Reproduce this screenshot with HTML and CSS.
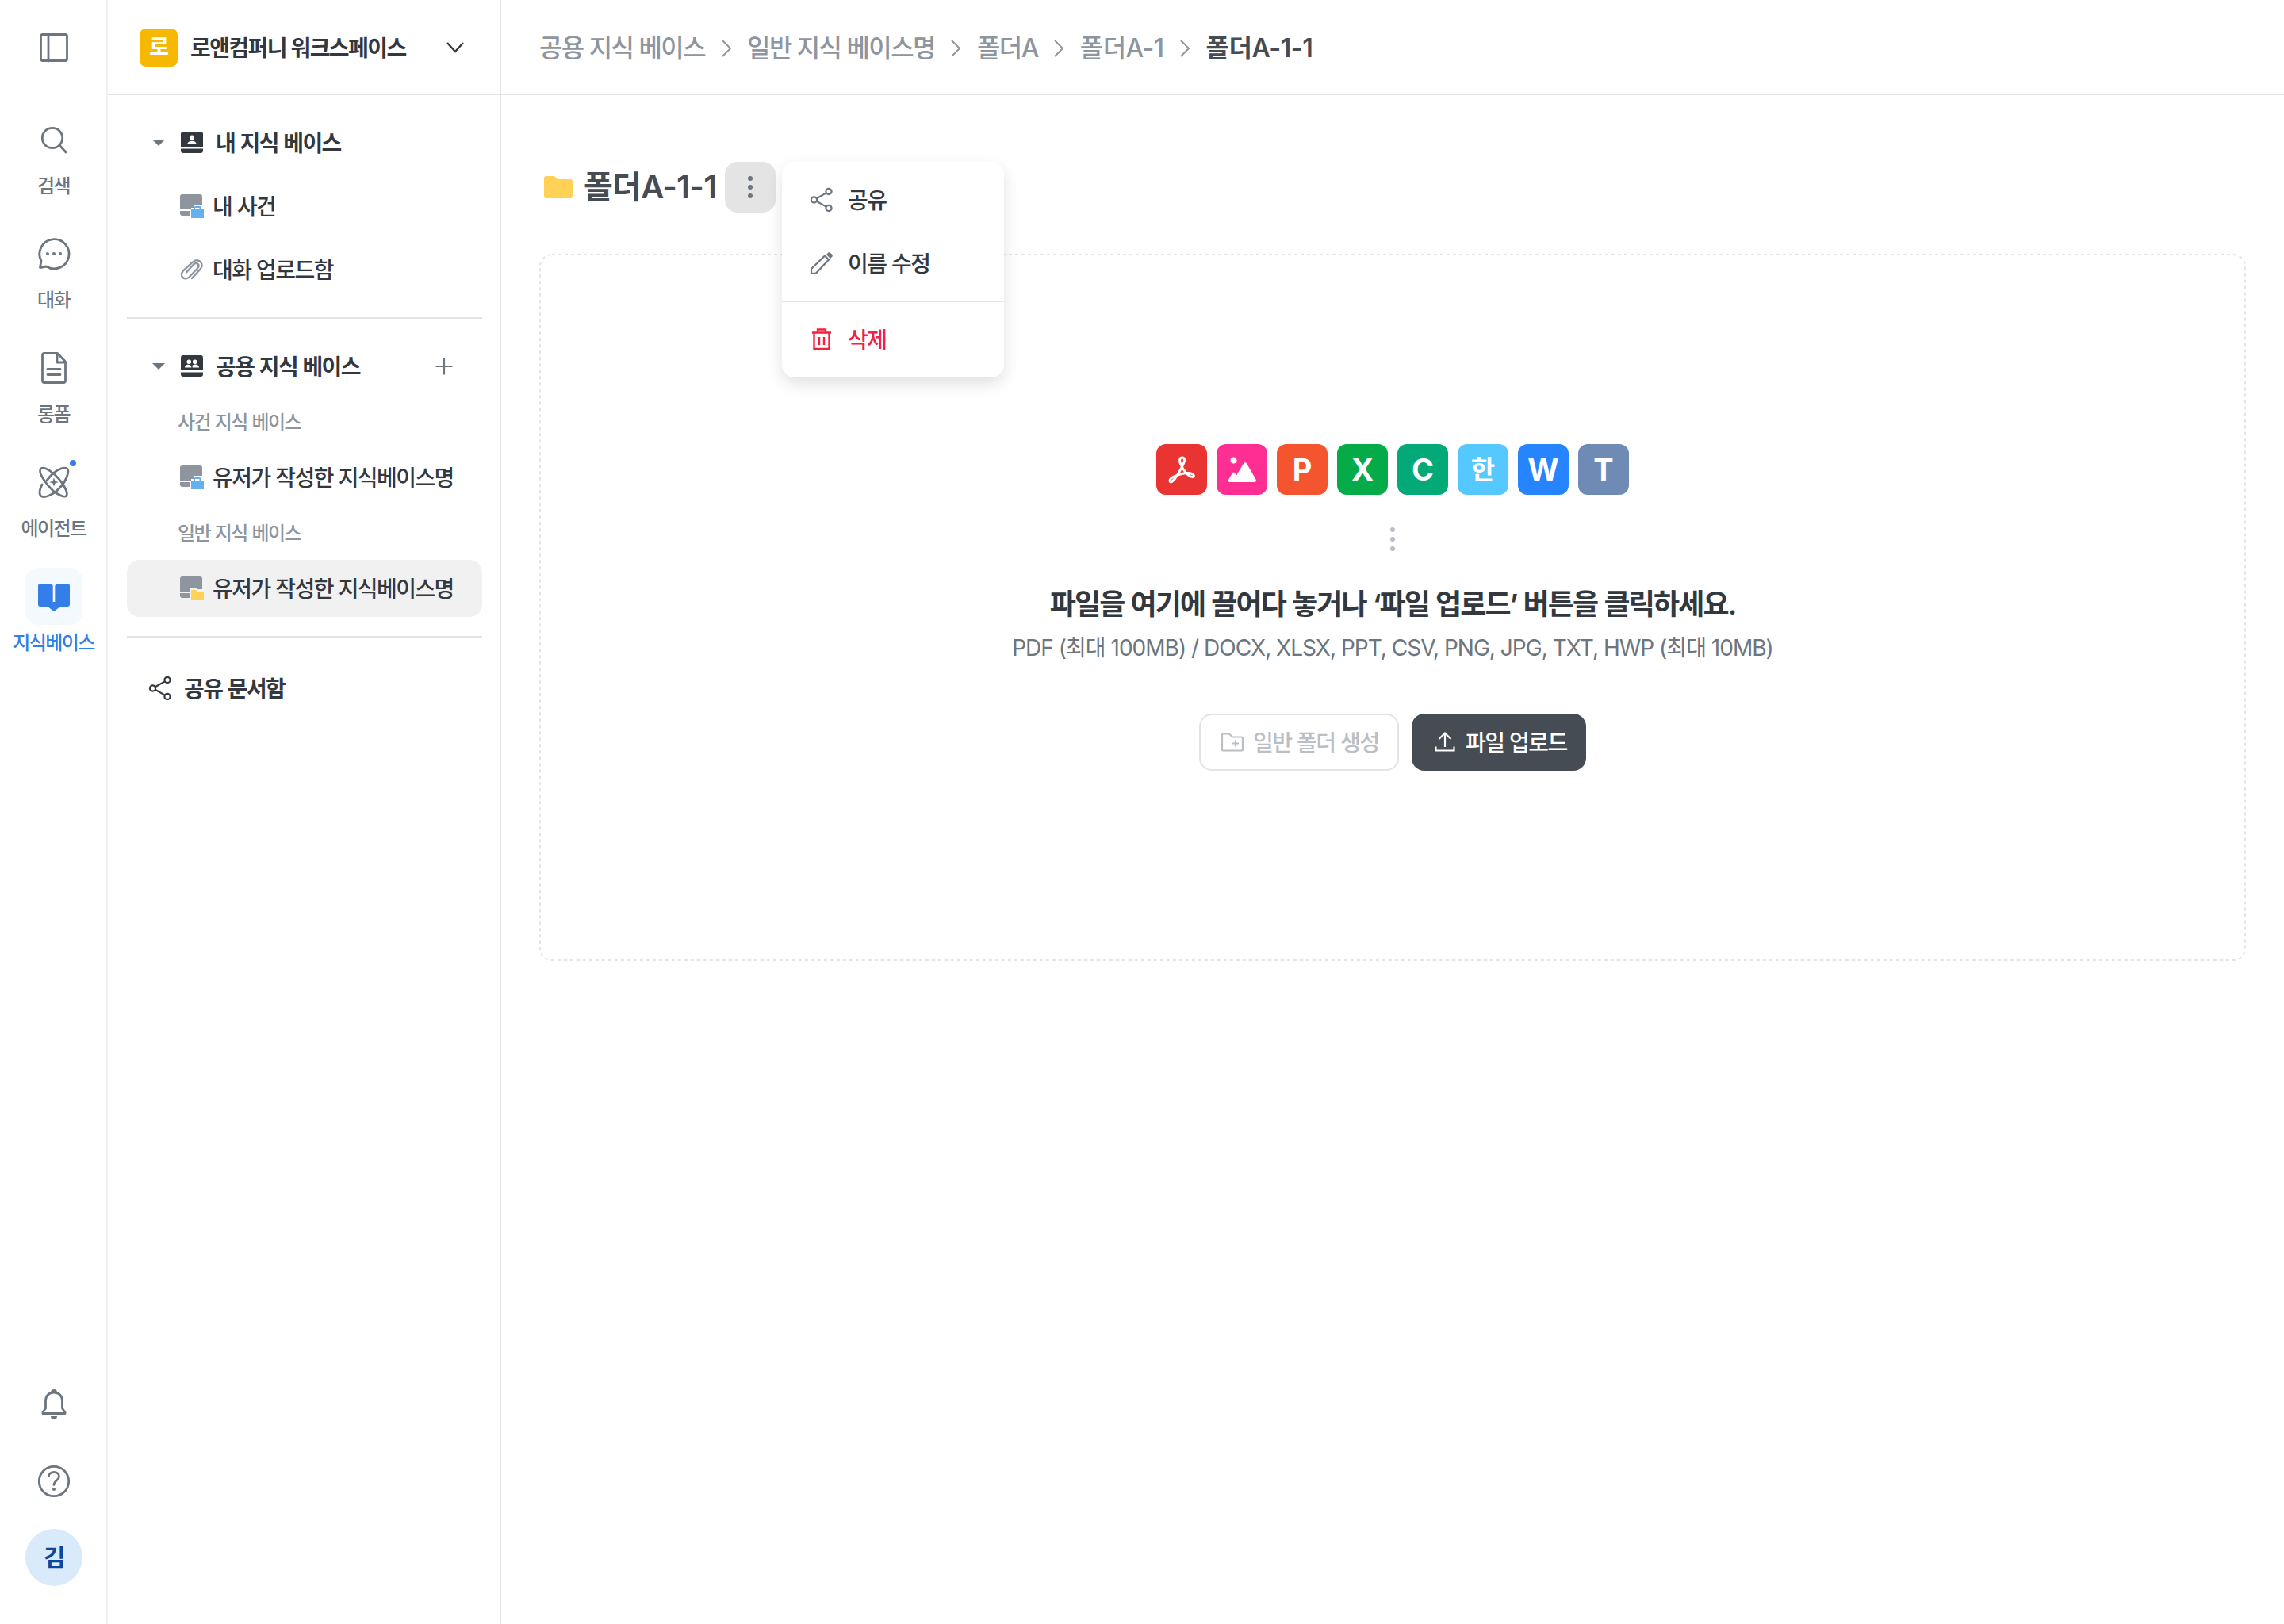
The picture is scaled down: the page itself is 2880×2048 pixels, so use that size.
FILE: index.html
```
<!DOCTYPE html>
<html lang="ko">

<head>
  <meta charset="UTF-8" />
  <meta name="viewport" content="width=device-width, initial-scale=1.0" />
  <title>지식베이스</title>
  <link rel="stylesheet" href="styles.css">
</head>

<body>
  <svg class="sprite">
    <symbol id="share" viewBox="0 0 32 32">
      <g fill="none" stroke="currentColor" stroke-width="2.2">
        <circle cx="6.5" cy="16" r="3.6" />
        <circle cx="25" cy="5.5" r="3.6" />
        <circle cx="25" cy="26.5" r="3.6" />
        <path d="M9.7 14.2 21.8 7.4M9.7 17.8 21.8 24.6" />
      </g>
    </symbol>
    <symbol id="base-case" viewBox="0 0 32 32">
      <path fill="#8e959e" d="M4 1h22a3 3 0 0 1 3 3v10H18v4h-3v2H1V4a3 3 0 0 1 3-3zM1 22h12v6H4a3 3 0 0 1-3-3z" />
      <path fill="#66b0f0" d="M15 20h3.500v-2.500a1.500 1.500 0 0 1 1.500-1.500h6a1.500 1.500 0 0 1 1.500 1.500v2.500h3.500v11H15zM20 20h5.500v-2H20z" fill-rule="evenodd" />
    </symbol>
    <symbol id="base-folder" viewBox="0 0 32 32">
      <path fill="#8e959e" d="M4 1h22a3 3 0 0 1 3 3v13h-6l-1-1h-8v4H1V4a3 3 0 0 1 3-3zM1 22h12v6H4a3 3 0 0 1-3-3z" />
      <path fill="#ffd154" d="M16 18h5l2 2h8v11H15V19z" />
    </symbol>
    <symbol id="chevron" viewBox="0 0 32 32">
      <path fill="none" stroke="currentColor" stroke-width="2" d="m11 6 10 10-10 10" />
    </symbol>
  </svg>

  <div class="app">
    <nav class="rail">
      <div class="rail-top">
        <div class="rail-icon">
          <svg viewBox="0 0 48 48"><rect x="7.500" y="7.500" width="33" height="33" rx="2" /><path d="M17 7v34" /></svg>
        </div>
      </div>
      <ul class="rail-menu">
        <li>
          <div class="rail-icon">
            <svg viewBox="0 0 48 48"><circle cx="22" cy="22" r="12.700" /><path d="m31 31 8 9" /></svg>
          </div>
          <span>검색</span>
        </li>
        <li>
          <div class="rail-icon">
            <svg viewBox="0 0 48 48">
              <path d="M8 33A18.600 18.600 0 1 1 14.500 40L6.500 41.500z" />
              <g class="solid"><circle cx="16" cy="24" r="2" /><circle cx="24" cy="24" r="2" /><circle cx="32" cy="24" r="2" /></g>
            </svg>
          </div>
          <span>대화</span>
        </li>
        <li>
          <div class="rail-icon">
            <svg viewBox="0 0 48 48"><path d="M11 5.500h17.500L38.500 16v24a2.500 2.500 0 0 1-2.500 2.500H12A2.500 2.500 0 0 1 9.500 40V8a2.500 2.500 0 0 1 2.500-2.500M28 6v11h10.500M16 25.500h16M16 32.500h16" /></svg>
          </div>
          <span>롱폼</span>
        </li>
        <li>
          <div class="rail-icon">
            <svg viewBox="0 0 48 48">
              <path d="M15 22C21 13 33 4 40 6.500c5 3-1 17-9 25C22 41 11 45 7 41c-2-3-1-8 2-14" />
              <path d="M24 36C14 27 3 11 7.500 7 12 3 25 13 32 22c7 9 10 17 7.500 19.500S30 40 24 36z" />
              <path class="solid" d="m24 18.500 1.500 4 4 1.500-4 1.500-1.500 4-1.500-4-4-1.500 4-1.500z" />
            </svg>
            <i class="dot"></i>
          </div>
          <span>에이전트</span>
        </li>
        <li class="active">
          <div class="rail-icon">
            <svg viewBox="0 0 48 48"><path class="solid" d="M7 8h12a4 4 0 0 1 3.700 3V31h2.600V11A4 4 0 0 1 29 8h12a3 3 0 0 1 3 3v23a3 3 0 0 1-3 3h-9l-8 6-8-6H7a3 3 0 0 1-3-3V11a3 3 0 0 1 3-3z" /></svg>
          </div>
          <span>지식베이스</span>
        </li>
      </ul>
      <div class="rail-bottom">
        <div class="rail-icon">
          <svg viewBox="0 0 48 48"><path d="M24 8c-7 0-10.500 5-10.500 10.500V28L10 33v1.500h28V33l-3.500-5v-9.500C34.500 13 31 8 24 8z" /><path class="solid" d="M20 8a4 4 0 0 1 8 0zM20 38h8a4 4 0 0 1-8 0z" /></svg>
        </div>
        <div class="rail-icon">
          <svg viewBox="0 0 48 48"><circle cx="24" cy="24" r="18.700" /><path d="M17.500 17.500c0-3 3-5 6.500-5s6.500 2 6.500 5.500c0 5-6.500 5-6.500 10.500" /><circle class="solid" cx="24" cy="34" r="2" /></svg>
        </div>
        <div class="avatar">김</div>
      </div>
    </nav>

    <aside class="sidebar">
      <div class="workspace">
        <b class="workspace-logo">로</b>
        <strong>로앤컴퍼니 워크스페이스</strong>
        <svg class="down" viewBox="0 0 32 32"><path d="m6 10 10 11 10-11" /></svg>
      </div>
      <div class="tree">
        <div class="row head">
          <i class="caret"></i>
          <svg viewBox="0 0 32 32"><path fill="currentColor" fill-rule="evenodd" d="M5 2h22a3 3 0 0 1 3 3v16H2V5a3 3 0 0 1 3-3zM2 23.500h28V26a3 3 0 0 1-3 3H5a3 3 0 0 1-3-3zM16 6.500a3 3 0 1 0 0 6 3 3 0 0 0 0-6zM10.500 17.500h11c0-5-11-5-11 0z" /></svg>
          <strong>내 지식 베이스</strong>
        </div>
        <div class="row sub"><svg><use href="#base-case" /></svg><span>내 사건</span></div>
        <div class="row sub">
          <svg class="clip" viewBox="0 0 32 32"><path d="m16 27 10.500-11.500c6-7-3-15.500-9.500-9L5 17.500c-6 7 2.500 13 7.500 8L23 14.500c4-4.500-1-8.500-5-5L9 19.500" /></svg>
          <span>대화 업로드함</span>
        </div>
        <hr>
        <div class="row head">
          <i class="caret"></i>
          <svg viewBox="0 0 32 32"><path fill="currentColor" fill-rule="evenodd" d="M5 2h22a3 3 0 0 1 3 3v16H2V5a3 3 0 0 1 3-3zM2 23.500h28V26a3 3 0 0 1-3 3H5a3 3 0 0 1-3-3zM12.300 7.500a2.500 2.500 0 1 0 0 5.600 2.500 2.500 0 0 0 0-5.600zM19.700 7.500a2.500 2.500 0 1 0 0 5.600 2.500 2.500 0 0 0 0-5.600zM7 17.500h8.400c0-5-8.400-5-8.400 0zM16.600 17.500H25c0-4.500-6-5-8.400-2.500z" /></svg>
          <strong>공용 지식 베이스</strong>
          <svg class="plus" viewBox="0 0 32 32"><path d="M16 5.500v21M5.500 16h21" /></svg>
        </div>
        <p class="group">사건 지식 베이스</p>
        <div class="row sub"><svg><use href="#base-case" /></svg><span>유저가 작성한 지식베이스명</span></div>
        <p class="group">일반 지식 베이스</p>
        <div class="row sub active"><svg><use href="#base-folder" /></svg><span>유저가 작성한 지식베이스명</span></div>
        <hr>
        <div class="row shared"><svg><use href="#share" /></svg><strong>공유 문서함</strong></div>
      </div>
    </aside>

    <main class="main">
      <div class="breadcrumb">
        <span>공용 지식 베이스</span>
        <svg><use href="#chevron" /></svg>
        <span>일반 지식 베이스명</span>
        <svg><use href="#chevron" /></svg>
        <span>폴더A</span>
        <svg><use href="#chevron" /></svg>
        <span class="wide">폴더A-1</span>
        <svg><use href="#chevron" /></svg>
        <span class="wide current">폴더A-1-1</span>
      </div>

      <div class="title">
        <svg class="folder" viewBox="0 0 40 40"><path d="M4 6h11l4 4h16a3 3 0 0 1 3 3v18a3 3 0 0 1-3 3H5a3 3 0 0 1-3-3V9a3 3 0 0 1 2-3z" /></svg>
        <h1>폴더A-1-1</h1>
        <div class="more">
          <i></i><i></i><i></i>
          <ul class="menu">
            <li><svg><use href="#share" /></svg><span>공유</span></li>
            <li>
              <svg viewBox="0 0 32 32"><path fill="none" stroke="currentColor" stroke-width="2.200" stroke-linejoin="round" d="M3 29v-6L20 6.500l5 5L9 28.500z" /><path fill="currentColor" d="m22 5 2.500-2.500c1.500-1.500 6.500 3 5 5L27 10z" /></svg>
              <span>이름 수정</span>
            </li>
            <li class="delete">
              <svg viewBox="0 0 32 32"><path fill="none" stroke="currentColor" stroke-width="2.400" d="M4 7.500h24M11 7V3.500h10V7M6.500 8v20h19V8M13 13v10M19 13v10" /></svg>
              <span>삭제</span>
            </li>
          </ul>
        </div>
      </div>

      <section class="drop">
        <svg class="outline"><rect x="1" y="1" rx="15" /></svg>
        <div class="files">
          <div class="file pdf">
            <svg viewBox="0 0 64 64"><path d="M32.500 17c-3 0-4 4-1.500 9 3 7 10 16 15 15.500 3-1 1-5-6-5-8 0-23 5-23 9.500 0 4 5 1 9-6 4-6 9-16 9.500-19 .5-3-1-4-3-4z" /></svg>
          </div>
          <div class="file image">
            <svg viewBox="0 0 64 64"><circle cx="21.500" cy="20.500" r="4" /><path d="M17 48c-2 0-2.500-1.500-2-3l5-8.500c1-1.500 2-1.500 3 0l2 3 9-15c1-1.700 3-1.700 4 0l11.500 20c1 2 .5 3.500-2 3.500z" /></svg>
          </div>
          <div class="file ppt">P</div>
          <div class="file xls">X</div>
          <div class="file csv">C</div>
          <div class="file hwp">한</div>
          <div class="file doc">W</div>
          <div class="file txt">T</div>
        </div>
        <div class="dots"><i></i><i></i><i></i></div>
        <h2>파일을 여기에 끌어다 놓거나 ‘파일 업로드’ 버튼을 클릭하세요.</h2>
        <p>PDF (최대 100MB) / DOCX, XLSX, PPT, CSV, PNG, JPG, TXT, HWP (최대 10MB)</p>
        <div class="buttons">
          <button class="btn" disabled>
            <svg viewBox="0 0 32 32"><path d="M4 5.500h8l4 4h12a1 1 0 0 1 1 1v15a1 1 0 0 1-1 1H4a1 1 0 0 1-1-1v-19a1 1 0 0 1 1-1zM20 13.500v8M16 17.500h8" /></svg>
            <span>일반 폴더 생성</span>
          </button>
          <button class="btn primary">
            <svg viewBox="0 0 32 32"><path d="M16 22V5M8.500 12 16 4.500l7.500 7.500M4.500 21.500v5h23v-5" /></svg>
            <span>파일 업로드</span>
          </button>
        </div>
      </section>
    </main>
  </div>
</body>

</html>
```
FILE: styles.css
```
* {
  margin: 0;
  padding: 0;
  box-sizing: border-box;
}

body {
  font-family: Inter, "Noto Sans CJK KR", sans-serif;
  font-size: 28px;
  font-weight: 500;
  line-height: 40px;
  letter-spacing: -0.056em;
  word-spacing: 0.03em;
  color: #33383f;
  background: #fff;
}

ul {
  list-style: none;
}

strong {
  font-weight: 600;
}

svg {
  flex: none;
  width: 32px;
  height: 32px;
}

.sprite {
  display: none;
}

.app {
  display: flex;
  height: 2048px;
}

/* 왼쪽 아이콘 메뉴 */
.rail {
  display: flex;
  flex-direction: column;
  align-items: center;
  width: 136px;
  padding: 24px 0 48px 2px;
  border-right: 2px solid #edf1f5;
  color: #6d757e;
}

.rail-icon {
  position: relative;
  display: flex;
  align-items: center;
  justify-content: center;
  width: 72px;
  height: 72px;
  border-radius: 16px;
}

.rail-icon svg {
  width: 48px;
  height: 48px;
  fill: none;
  stroke: currentColor;
  stroke-width: 2.8;
  stroke-linecap: round;
  stroke-linejoin: round;
}

.rail-icon .solid {
  fill: currentColor;
  stroke: none;
}

.rail-menu {
  margin-top: 44px;
}

.rail-menu li {
  display: flex;
  flex-direction: column;
  align-items: center;
  height: 144px;
  font-size: 24px;
  line-height: 36px;
}

.rail-menu span {
  margin: 5px 1px 0 0;
  white-space: nowrap;
}

.rail-menu .active {
  color: #337ee8;
}

.rail-menu .active .rail-icon {
  background: #f4f9fe;
}

.dot {
  position: absolute;
  top: 8px;
  right: 8px;
  width: 8px;
  height: 8px;
  border-radius: 50%;
  background: #337ee8;
}

.rail-bottom {
  display: flex;
  flex-direction: column;
  gap: 24px;
  margin-top: auto;
}

.avatar {
  width: 72px;
  height: 72px;
  border-radius: 50%;
  background: #d9eafb;
  color: #0c479e;
  font-size: 30px;
  font-weight: 600;
  line-height: 72px;
  text-align: center;
}

/* 사이드바 */
.sidebar {
  width: 496px;
  border-right: 2px solid #e4e4e4;
}

.workspace {
  display: flex;
  align-items: center;
  height: 120px;
  padding: 2px 40px 0;
  border-bottom: 2px solid #e4e4e4;
}

.workspace strong {
  padding-top: 1px;
  word-spacing: 0;
}

.workspace-logo {
  width: 48px;
  height: 48px;
  margin-right: 16px;
  border-radius: 8px;
  background: #f6b800;
  color: #fff;
  font-size: 27px;
  line-height: 48px;
  text-align: center;
}

.down {
  margin-left: auto;
  fill: none;
  stroke: #33383f;
  stroke-width: 2.4;
}

.tree {
  padding: 24px 22px 0 24px;
}

.row {
  display: flex;
  align-items: center;
  height: 72px;
  padding-right: 32px;
  border-radius: 16px;
  white-space: nowrap;
}

.row + .row {
  margin-top: 8px;
}

.row span,
.row strong,
.menu span,
.btn span {
  padding-top: 2px;
}

.head {
  padding-left: 32px;
}

.head svg {
  margin: 0 14px 0 18px;
}

.caret {
  border: 8px solid transparent;
  border-top-color: #6d757e;
  border-bottom: 0;
}

.head .plus {
  margin: 0 0 0 auto;
  fill: none;
  stroke: #6d757e;
  stroke-width: 2.2;
}

.sub {
  padding-left: 66px;
}

.sub svg {
  margin-right: 10px;
}

.sub.active {
  background: #f1f1f1;
}

.clip {
  fill: none;
  stroke: #8e959e;
  stroke-width: 2.4;
  stroke-linecap: round;
}

.group {
  height: 68px;
  padding-left: 64px;
  font-size: 24px;
  line-height: 69px;
  color: #8e959e;
}

.tree hr {
  height: 2px;
  margin: 24px 0;
  border: 0;
  background: #e4e4e4;
}

.shared {
  height: 80px;
  padding-left: 26px;
}

.shared svg {
  margin-right: 14px;
}

/* 본문 */
.main {
  flex: 1;
}

.breadcrumb {
  display: flex;
  align-items: center;
  height: 120px;
  padding: 3px 0 0 48px;
  border-bottom: 2px solid #e4e4e4;
  color: #8e959e;
  font-size: 32px;
  word-spacing: 0;
}

.breadcrumb svg {
  margin: 0 10.5px;
}

.breadcrumb .wide {
  letter-spacing: -0.018em;
}

.breadcrumb .current {
  color: #464c53;
  font-weight: 600;
  letter-spacing: -0.014em;
}

.title {
  display: flex;
  align-items: center;
  height: 64px;
  margin: 84px 0 52px 52px;
}

.folder {
  width: 40px;
  height: 40px;
  fill: #ffd154;
}

.title h1 {
  width: 178px;
  margin: 0 0 0 12px;
  color: #464c53;
  font-size: 40px;
  font-weight: 600;
  letter-spacing: -0.018em;
  white-space: nowrap;
}

.more {
  position: relative;
  display: flex;
  flex-direction: column;
  align-items: center;
  justify-content: center;
  gap: 5px;
  width: 64px;
  height: 64px;
  border-radius: 16px;
  background: #e4e4e4;
}

.more > i {
  width: 6px;
  height: 6px;
  border-radius: 50%;
  background: #6d757e;
}

.menu {
  position: absolute;
  top: 0;
  left: 72px;
  z-index: 1;
  width: 280px;
  padding: 8px 0;
  border-radius: 16px;
  background: #fff;
  box-shadow: 0 8px 20px rgba(0, 0, 0, 0.12);
}

.menu li {
  display: flex;
  align-items: center;
  gap: 17px;
  height: 80px;
  padding-left: 34px;
}

.menu svg {
  color: #6d757e;
}

.menu .delete {
  height: 97px;
  margin: 7px 0 -8px;
  padding-bottom: 2px;
  border-top: 2px solid #e4e4e4;
  color: #f5203e;
}

.menu .delete svg {
  color: inherit;
}

.drop {
  position: relative;
  display: flex;
  flex-direction: column;
  align-items: center;
  width: 2152px;
  height: 892px;
  margin-left: 48px;
  padding-top: 240px;
}

.outline {
  position: absolute;
  inset: 0;
  width: 100%;
  height: 100%;
}

.outline rect {
  width: calc(100% - 2px);
  height: calc(100% - 2px);
  fill: none;
  stroke: #e4e4e4;
  stroke-width: 2;
  stroke-dasharray: 4 4;
}

.files {
  display: flex;
  gap: 12px;
}

.file {
  width: 64px;
  height: 64px;
  border-radius: 12px;
  color: #fff;
  font-size: 38px;
  font-weight: 650;
  line-height: 64px;
  letter-spacing: 0;
  text-align: center;
}

.file svg {
  display: block;
  width: 64px;
  height: 64px;
  fill: #fff;
}

.pdf {
  background: #ea3434;
}

.pdf svg {
  fill: none;
  stroke: #fff;
  stroke-width: 3;
}

.image {
  background: #ff2e93;
}

.ppt {
  background: #f5552e;
}

.xls {
  background: #05ab48;
}

.csv {
  background: #03aa78;
}

.hwp {
  background: #54c8ff;
  font-size: 33px;
  font-weight: 700;
}

.doc {
  background: #2684ff;
}

.txt {
  background: #6f8ab5;
}

.dots {
  display: flex;
  flex-direction: column;
  gap: 6px;
  margin-top: 41px;
}

.dots i {
  width: 6px;
  height: 6px;
  border-radius: 50%;
  background: #bbbec4;
}

.drop h2 {
  margin-top: 41px;
  font-size: 36px;
  font-weight: 600;
  line-height: 52px;
  letter-spacing: -0.052em;
}

.drop p {
  margin-top: 9px;
  color: #6d757e;
  font-weight: 400;
  letter-spacing: -0.035em;
  word-spacing: 0;
}

.buttons {
  display: flex;
  gap: 16px;
  margin-top: 63px;
}

.btn {
  display: flex;
  align-items: center;
  gap: 10px;
  width: 252px;
  height: 72px;
  padding-left: 24px;
  border: 2px solid #e4e4e4;
  border-radius: 16px;
  background: #fff;
  color: #bbbec4;
  font: inherit;
  letter-spacing: inherit;
  word-spacing: inherit;
  white-space: nowrap;
}

.btn svg {
  fill: none;
  stroke: currentColor;
  stroke-width: 2.2;
}

.btn.primary {
  width: 220px;
  border-color: #464c53;
  background: #464c53;
  color: #fff;
}
```
